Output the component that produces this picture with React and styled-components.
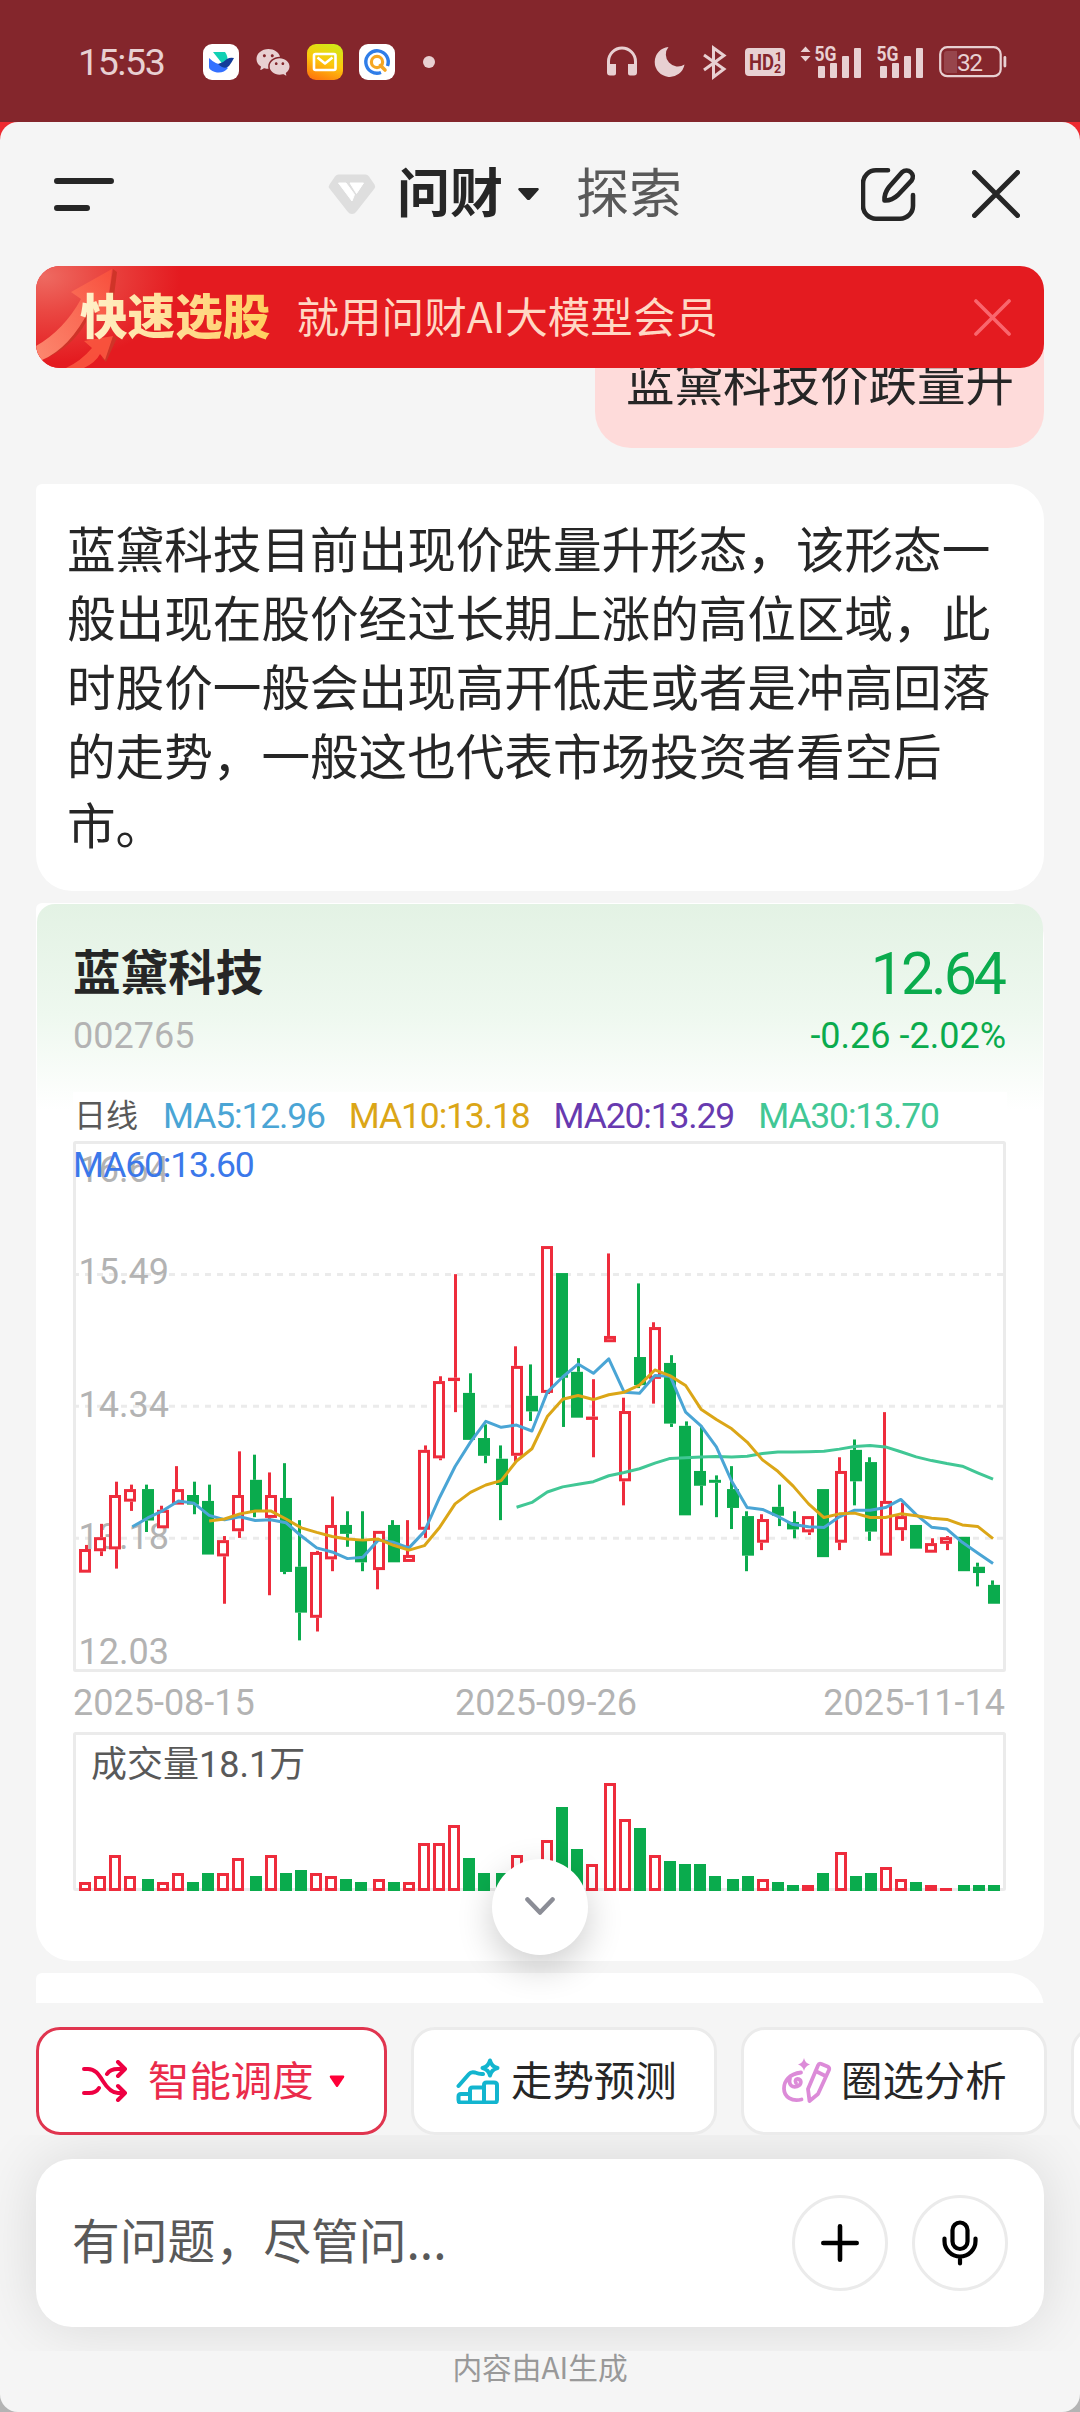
import React from "react"
import styled, { createGlobalStyle } from "styled-components"
import { RiWechatFill } from "react-icons/ri"

const GlobalStyle = createGlobalStyle`
  * {
    box-sizing: border-box;
  }

  body {
    background: #84262c;
    margin: 0;
  }
`

const cjk = `"Noto Sans CJK SC", sans-serif`
const latin = `Roboto, "Noto Sans CJK SC", sans-serif`

const red = "#ee2c3c"
const green = "#0aab4d"

const Screen = styled.div`
  background: linear-gradient(#ee2a30 50%, #b4b4b4 50%);
  color: #262626;
  font-family: ${cjk};
  height: 2412px;
  overflow: hidden;
  width: 1080px;
`

const StatusBar = styled.div`
  align-items: center;
  background: #84262c;
  color: #e8d0d2;
  display: flex;
  height: 122px;
  justify-content: space-between;
  padding: 2px 73px 0 78px;
`

const StatusGroup = styled.div`
  align-items: center;
  display: flex;
  gap: 16px;
`

const Clock = styled.span`
  font-family: ${latin};
  font-size: 37.5px;
  letter-spacing: -1.4px;
  line-height: 40px;
  width: 109px;
`

const AppIcon = styled.span`
  align-items: center;
  background: ${props => props.$bg || "none"};
  border-radius: 9px;
  display: flex;
  height: 36px;
  justify-content: center;
  width: 36px;
`

const Dot = styled.i`
  background: currentColor;
  border-radius: 50%;
  height: 12px;
  width: 12px;
`

const Signal = styled.svg`
  overflow: visible;
`

const Sheet = styled.div`
  background: #f5f5f5;
  border-radius: 18px;
  display: flex;
  flex-direction: column;
  height: 2290px;
  overflow: hidden;
  position: relative;
`

const Header = styled.header`
  align-items: center;
  display: flex;
  flex: none;
  height: 144px;
  padding: 0 60px 0 54px;
`

const HeaderTabs = styled.div`
  align-items: center;
  display: flex;
  margin-left: 214px;
`

const Tab = styled.span`
  color: ${props => (props.$active ? "#262626" : "#595959")};
  font-size: 53px;
  font-weight: ${props => (props.$active ? 700 : 400)};
  line-height: 60px;
  margin: -9px 0 0 ${props => (props.$active ? 21 : 36)}px;
`

const Caret = styled.svg`
  margin-left: ${props => props.$gap || 0}px;
`

const HeaderActions = styled.div`
  align-items: center;
  display: flex;
  gap: 56px;
  margin-left: auto;
`

const Banner = styled.div`
  align-items: center;
  background: #e41b20;
  border-radius: 24px;
  display: flex;
  flex: none;
  height: 102px;
  margin: 0 36px;
  overflow: hidden;
  padding: 0 33px 0 44px;
  position: relative;
  z-index: 1;
`

const BannerArt = styled.svg`
  left: 0;
  position: absolute;
  top: 0;
`

const BannerTitle = styled.strong`
  background: linear-gradient(90deg, #fff2cc, #ffd98a 60%, #ffcf5e);
  background-clip: text;
  color: transparent;
  font-size: 47.6px;
  font-weight: 900;
  line-height: 60px;
  position: relative;
  top: -3px;
`

const BannerText = styled.span`
  color: #ffd8c4;
  flex: 1;
  font-size: 42.6px;
  line-height: 60px;
  margin: -4px 0 0 26px;
`

const Feed = styled.main`
  display: flex;
  flex: none;
  flex-direction: column;
  height: 1685px;
  margin-top: -50px;
  overflow: hidden;
  padding: 0 36px;
`

const Question = styled.div`
  align-self: flex-end;
  background: #fedbda;
  border-radius: 36px 6px 36px 36px;
  flex: none;
  font-size: 48.5px;
  height: 130px;
  line-height: 69px;
  margin-bottom: 36px;
  padding: 28px 30px 32px 31px;
`

const Card = styled.section`
  background: #fff;
  border-radius: 6px 36px 36px 36px;
  flex: none;
  height: ${props => props.$height}px;
  margin-bottom: 12px;
`

const Answer = styled.p`
  font-size: 48.6px;
  line-height: 69px;
  margin: 0;
  padding: 29px 30px 0 31px;
`

const StockBody = styled.div`
  background: linear-gradient(#e3f2e4, #eef8ef 110px, #fff 206px);
  border-radius: 18px 24px 0 0;
  padding: 0 36px;
  position: relative;
  margin: 0 1px;
  top: 1px;
`

const StockHead = styled.div`
  align-items: flex-end;
  display: flex;
  height: 153px;
  justify-content: space-between;
`

const StockName = styled.div`
  font-size: 47.6px;
  font-weight: 700;
  line-height: 60px;
  margin-bottom: 15px;
`

const StockCode = styled.div`
  color: #b3b3b3;
  font-family: ${latin};
  font-size: 36px;
  line-height: 42px;
`

const Quote = styled.div`
  color: ${green};
  font-family: ${latin};
  margin-right: 1px;
  text-align: right;
`

const Price = styled.div`
  font-size: 59px;
  letter-spacing: -3px;
  line-height: 60px;
  margin: 0 2px 11px 0;
`

const Change = styled.div`
  font-size: 36px;
  line-height: 42px;
`

const Legend = styled.div`
  background: #fff;
  column-gap: 24px;
  display: flex;
  flex-wrap: wrap;
  font-family: ${latin};
  font-size: 35.5px;
  height: 49px;
  letter-spacing: -1.15px;
  line-height: 49px;
  margin-top: 35px;
  position: relative;
  z-index: 1;
`

const LegendItem = styled.span`
  color: ${props => props.$color};
`

const Period = styled.span`
  color: #595959;
  font-size: 32px;
  letter-spacing: 0;
  padding: 0 1px;
`

const Chart = styled.svg`
  display: block;
`

const Dates = styled.div`
  align-items: center;
  color: #b3b3b3;
  display: flex;
  font-family: ${latin};
  font-size: 36px;
  height: 60px;
  justify-content: space-between;
  padding: 1px 2px 0 0;

  span:nth-child(2) {
    margin-left: 14px;
  }
`

const ScrollDown = styled.button`
  align-items: center;
  background: #fff;
  border: 0;
  border-radius: 50%;
  bottom: 457px;
  box-shadow: 0 12px 36px rgba(0, 0, 0, 0.2);
  display: flex;
  height: 96px;
  justify-content: center;
  left: 492px;
  padding: 0;
  position: absolute;
  width: 96px;
`

const Chips = styled.div`
  display: flex;
  flex: none;
  gap: 24px;
  margin-top: 24px;
  overflow: hidden;
  padding-left: 36px;
`

const Chip = styled.button`
  align-items: center;
  background: #fff;
  border: 3px solid ${props => (props.$active ? "#e0354f" : "#ebebeb")};
  border-radius: 24px;
  color: ${props => (props.$active ? "#ea2b4b" : "#262626")};
  display: flex;
  flex: none;
  font-family: ${cjk};
  font-size: 41.4px;
  height: 108px;
  line-height: 60px;
  padding: 0 0 0 ${props => props.$pad || 38}px;
  width: ${props => props.$width}px;
`

const ChipLabel = styled.span`
  margin: -7px 0 0 ${props => props.$gap}px;
`

const Composer = styled.div`
  flex: none;
  height: 216px;
  overflow: hidden;
  padding: 24px 36px;
`

const InputBox = styled.div`
  align-items: center;
  background: #fff;
  border-radius: 36px;
  box-shadow: 0 0 60px rgba(0, 0, 0, 0.12);
  display: flex;
  gap: 24px;
  height: 168px;
  padding: 0 36px;
`

const Placeholder = styled.span`
  color: #595959;
  flex: 1;
  font-size: 47.8px;
  line-height: 60px;
  margin-top: -8px;
`

const RoundButton = styled.button`
  align-items: center;
  background: #fff;
  border: 3px solid #ebebeb;
  border-radius: 50%;
  display: flex;
  height: 96px;
  justify-content: center;
  padding: 0;
  width: 96px;
`

const Note = styled.div`
  color: #999;
  font-size: 29.7px;
  line-height: 32px;
  text-align: center;
`

// [isUp, high, body top, body bottom, low], in plot units measured downwards
const candles = [
  [1, 1122, 1133, 1197, 1197], [1, 1065, 1101, 1139, 1152], [1, 951, 987, 1134, 1186],
  [1, 959, 971, 1005, 1030], [0, 959, 971, 1056, 1087], [1, 1016, 1027, 1077, 1077],
  [1, 909, 971, 1013, 1013], [0, 951, 987, 1013, 1039], [0, 959, 1003, 1148, 1148],
  [1, 1098, 1109, 1153, 1281], [1, 869, 987, 1085, 1103], [0, 878, 946, 1033, 1047],
  [1, 926, 987, 1049, 1258], [0, 901, 995, 1195, 1201], [0, 1055, 1181, 1305, 1380],
  [1, 1138, 1141, 1319, 1356], [1, 991, 1068, 1161, 1193], [0, 1031, 1068, 1092, 1127],
  [0, 1031, 1106, 1169, 1193], [1, 1084, 1084, 1190, 1242], [0, 1055, 1068, 1169, 1169],
  [1, 1055, 1149, 1168, 1168], [1, 853, 865, 1081, 1103], [1, 666, 679, 888, 893],
  [1, 390, 670, 679, 763], [0, 658, 711, 838, 838], [0, 796, 833, 881, 901],
  [0, 853, 889, 960, 1055], [1, 585, 638, 881, 897], [0, 634, 719, 761, 787],
  [1, 314, 314, 711, 714], [0, 387, 387, 670, 803], [0, 617, 654, 778, 778],
  [1, 674, 775, 784, 885], [1, 334, 557, 574, 574], [1, 724, 760, 950, 1015],
  [0, 415, 614, 690, 698], [1, 520, 533, 673, 740], [0, 609, 630, 794, 803],
  [0, 788, 800, 1042, 1042], [0, 800, 922, 962, 1015], [0, 934, 946, 954, 1047],
  [0, 909, 971, 1022, 1079], [0, 1031, 1044, 1151, 1193], [1, 1039, 1052, 1116, 1136],
  [0, 959, 1019, 1043, 1071], [0, 1031, 1060, 1080, 1104], [1, 1044, 1044, 1088, 1095],
  [0, 971, 971, 1155, 1155], [1, 885, 922, 1116, 1136], [0, 837, 865, 950, 1015],
  [0, 885, 898, 1086, 1111], [1, 763, 1003, 1151, 1151], [1, 1008, 1044, 1082, 1111],
  [0, 1068, 1068, 1132, 1132], [1, 1104, 1117, 1143, 1143], [1, 1098, 1101, 1119, 1136],
  [0, 1100, 1100, 1193, 1193], [0, 1170, 1181, 1198, 1234], [0, 1218, 1230, 1281, 1281],
]

const volumes = [
  9, 15, 36, 15, 12, 9, 18, 9, 18, 18, 33, 15, 36, 18, 21, 18, 15, 12, 9, 12,
  9, 9, 48, 48, 66, 33, 18, 18, 36, 24, 51, 84, 42, 27, 108, 72, 63, 36, 30, 27,
  27, 15, 12, 15, 12, 9, 6, 6, 18, 39, 15, 18, 24, 12, 9, 6, 3, 6, 6, 6,
]

const averages = [
  {
    color: "#41c795",
    start: 28,
    values: [
      1020, 1007, 979, 965, 958, 951, 935, 926, 916, 901, 888, 886, 884, 883, 884, 882,
      875, 871, 871, 870, 869, 863, 856, 853, 857, 870, 884, 894, 902, 909, 927, 944,
    ],
  },
  {
    color: "#4aa5d5",
    start: 3,
    values: [
      1073, 1049, 1029, 1003, 1009, 1042, 1054, 1046, 1056, 1054, 1062, 1098, 1130, 1141,
      1159, 1155, 1109, 1115, 1130, 1086, 993, 910, 844, 788, 804, 798, 814, 709, 668, 633,
      658, 619, 709, 712, 664, 666, 763, 800, 857, 950, 1021, 1026, 1045, 1067, 1073, 1075,
      1046, 1028, 1028, 1021, 999, 1040, 1074, 1079, 1115, 1144, 1172,
    ],
  },
  {
    color: "#dba617",
    start: 8,
    values: [
      1057, 1052, 1038, 1030, 1030, 1052, 1076, 1088, 1099, 1106, 1109, 1106, 1123, 1136,
      1124, 1074, 1011, 980, 960, 948, 895, 862, 775, 728, 718, 729, 716, 709, 690, 649,
      665, 691, 755, 783, 808, 844, 892, 923, 963, 1011, 1048, 1038, 1036, 1048, 1048, 1038,
      1043, 1050, 1053, 1068, 1072, 1105,
    ],
  },
]

const priceLabels = [
  ["16.64", 41],
  ["15.49", 142.5],
  ["14.34", 275.7],
  ["13.18", 407.7],
  ["12.03", 522.8],
]

const legend = [
  ["MA5:12.96", "#4aa5d5"],
  ["MA10:13.18", "#dba617"],
  ["MA20:13.29", "#673ab0"],
  ["MA30:13.70", "#41c795"],
  ["MA60:13.60", "#3b78ea"],
]

// Bodies and wicks snap to a 3px grid
const bodyX = i => 6 + 15 * i + 3 * Math.floor(0.132 * i + 0.558)
const wickX = i => 12 + 15 * i + 3 * Math.floor(0.132 * i + 0.106)
const lineX = i => 13.2 + 15.37 * i
const plotY = v => (v - 30) / 2.7034

const Bar = ({ up, x, y, height }) =>
  up && height > 6 ? (
    <rect x={x + 1.5} y={y + 1.5} width={9} height={height - 3} fill="#fff" stroke={red} strokeWidth={3} />
  ) : (
    <rect x={x} y={y} width={12} height={height} fill={up ? red : green} />
  )

const Candle = ({ index, up, high, top, bottom, low }) => {
  const color = up ? red : green
  const x = wickX(index)
  const body = plotY(top)
  return (
    <g>
      <Bar up={up} x={bodyX(index)} y={body} height={plotY(bottom) - body} />
      <rect x={x} y={plotY(high)} width={3} height={body - plotY(high)} fill={color} />
      <rect x={x} y={plotY(bottom)} width={3} height={plotY(low) - plotY(bottom)} fill={color} />
    </g>
  )
}

const PriceChart = () => (
  <Chart width="933" height="531">
    <rect x="1.5" y="1.5" width="930" height="528" rx="1" fill="none" stroke="#ebebeb" strokeWidth="3" />
    {[133.6, 265.3, 397.3].map(y => (
      <line key={y} x1="0" x2="931" y1={y} y2={y} stroke="#ebebeb" strokeWidth="3" strokeDasharray="6 6" />
    ))}
    {priceLabels.map(([label, y]) => (
      <text key={label} x="5.5" y={y} fill="#b3b3b3" fontFamily="Roboto" fontSize="36">
        {label}
      </text>
    ))}
    {candles.map(([up, high, top, bottom, low], i) => (
      <Candle key={i} index={i} up={up} high={high} top={top} bottom={bottom} low={low} />
    ))}
    {averages.map(({ color, start, values }) => (
      <polyline
        key={color}
        fill="none"
        stroke={color}
        strokeWidth="3"
        strokeLinejoin="round"
        points={values.map((v, i) => `${lineX(start + i)},${plotY(v)}`).join(" ")}
      />
    ))}
  </Chart>
)

const VolumeChart = () => (
  <Chart width="933" height="159">
    <rect x="1.5" y="1.5" width="930" height="156" rx="1" fill="none" stroke="#ebebeb" strokeWidth="3" />
    <text x="18" y="45" fill="#595959" fontFamily="Roboto, 'Noto Sans CJK SC', sans-serif" fontSize="36">
      成交量18.1万
    </text>
    {volumes.map((height, i) => (
      <Bar key={i} up={candles[i][0]} x={bodyX(i)} y={159 - height} height={height} />
    ))}
  </Chart>
)

const BirdIcon = () => (
  <svg width="36" height="36" viewBox="0 0 36 36">
    <path d="M10 8h12q3 4 2.500 9l-5 3z" fill="#12d0b4" />
    <path d="M6 14q7 7 15 7l4 3q-5 6-13 4-6-2-6-5z" fill="#3370ff" />
    <path d="M15 20q5-1 9-5 3-2 7-1-2 4-5 8-3 3-7 1-2-1-4-3z" fill="#133c9a" />
  </svg>
)

const MailIcon = () => (
  <svg width="26" height="20" viewBox="0 0 26 20" fill="none" stroke="#fff" strokeWidth="2.600" strokeLinejoin="round">
    <rect x="2" y="2" width="21.500" height="16" rx="1.500" />
    <path d="M5.500 5.500l7.500 6 7.500-6" />
  </svg>
)

const FinderIcon = () => (
  <svg width="36" height="36" viewBox="0 0 36 36" fill="none">
    <path d="M22 28.500A11.200 11.200 0 1 1 28.500 22" stroke="#2f7de8" strokeWidth="3.400" />
    <circle cx="18" cy="18" r="5.600" stroke="#f5a623" strokeWidth="3.200" />
    <path d="M21.500 21.500l4.500 4.500" stroke="#f5a623" strokeWidth="3.600" strokeLinecap="round" />
  </svg>
)

const HeadphoneIcon = () => (
  <svg width="31" height="32" viewBox="0 0 31 32">
    <path d="M1.500 20v-4.500a13.500 13.500 0 0 1 27 0V20" fill="none" stroke="currentColor" strokeWidth="3" />
    <path d="M0 18h9v9.500a2 2 0 0 1-2 2H3a3 3 0 0 1-3-3zM21 18h9v8.500a3 3 0 0 1-3 3h-4a2 2 0 0 1-2-2z" fill="currentColor" />
  </svg>
)

const MoonIcon = () => (
  <svg width="32" height="32" viewBox="0 0 32 32">
    <path d="M14.500 1A15 15 0 1 0 30.500 18.500 12 12 0 0 1 14.500 1z" fill="currentColor" />
  </svg>
)

const BluetoothIcon = () => (
  <svg width="27" height="36" viewBox="0 0 27 36" fill="none" stroke="currentColor" strokeWidth="3">
    <path d="M2 11l20 14-10.500 8V4L22 11.500 2 26" />
  </svg>
)

const HdIcon = () => (
  <svg width="40" height="28" viewBox="0 0 40 28" fontFamily="Roboto" fontWeight="700">
    <rect width="40" height="28" rx="4" fill="currentColor" />
    <g fill="#84262c">
      <text x="4" y="22" fontSize="22" textLength="25" lengthAdjust="spacingAndGlyphs">HD</text>
      <text x="30" y="13" fontSize="12.500">1</text>
      <text x="29" y="25" fontSize="12.500">2</text>
    </g>
  </svg>
)

const SignalIcon = ({ arrows }) => (
  <Signal width={arrows ? 60 : 46} height="34" viewBox={arrows ? "-14 0 60 34" : "0 0 46 34"} fill="currentColor">
    {arrows && <path d="M-14.500 7l5-5.500 5 5.500zM-14.500 11l5 5.500 5-5.500z" />}
    <text x="-.5" y="16" fontFamily="Roboto" fontSize="21" fontWeight="700" textLength="22" lengthAdjust="spacingAndGlyphs">
      5G
    </text>
    <rect x="3" y="21" width="7" height="12" rx="1" />
    <rect x="15" y="18" width="7" height="15" rx="1" />
    <rect x="27" y="11" width="7" height="22" rx="1" />
    <rect x="39" y="3" width="7" height="30" rx="1" />
  </Signal>
)

const BatteryIcon = () => (
  <svg width="68" height="32" viewBox="0 0 68 32">
    <rect x="1.200" y="1.200" width="60.500" height="29" rx="7" fill="none" stroke="currentColor" strokeWidth="2.200" />
    <path d="M8 5h10v22H8a3 3 0 0 1-3-3V8a3 3 0 0 1 3-3z" fill="#97454c" />
    <rect x="64.500" y="10" width="2.800" height="11.500" rx="1.400" fill="currentColor" />
    <text x="18" y="24.500" fill="currentColor" fontFamily="Roboto" fontSize="24.500" textLength="26">32</text>
  </svg>
)

const GemIcon = () => (
  <svg width="48" height="40" viewBox="0 0 47 40">
    <path d="M10 .5h27q2 0 3.500 2l5.500 8q1.200 2 0 4L28 37.500q-2 2.500-4.500 2.500T19 37.500L1 14.500q-1.500-2 0-4l5.500-8Q8 .5 10 .5z" fill="#dedede" />
    <path d="M10 9h7.500L26 20.500 23.500 27z M21.500 9H35L28 19.500z" fill="#fff" stroke="#fff" strokeLinejoin="round" />
  </svg>
)

const EditIcon = () => (
  <svg width="55" height="55" viewBox="0 0 55 55" fill="none" stroke="#262626" strokeWidth="4.600" strokeLinecap="round" strokeLinejoin="round">
    <path d="M27 3.300H15a13 13 0 0 0-13 13v22.500a13 13 0 0 0 13 13h24a13 13 0 0 0 13-13V28" />
    <path d="M41 5.200c6-5 14 2 9.500 8.500L37 28q-6.500 6-13.500 5.500-.5-7 4.500-13.500z" />
  </svg>
)

const CrossIcon = ({ size, width, color }) => (
  <svg width={size} height={size} viewBox="0 0 48 48" fill="none" stroke={color} strokeWidth={width} strokeLinecap="round">
    <path d="M2.500 2.500l43 43M45.500 2.500l-43 43" />
  </svg>
)

const ShuffleIcon = () => (
  <svg width="46" height="42" viewBox="0 0 46 42" fill="none" stroke="#ee0042" strokeWidth="4" strokeLinecap="round" strokeLinejoin="round">
    <path d="M2 9h4c7 0 10.500 5 14.500 11.500S29 33 36 33h7M36 26l7 7-7 7" />
    <path d="M2 33h5c5 0 8-1.500 10-5M25 14c2.500-4 5.500-5 11-5h7M36 2l7 7-7 7" />
  </svg>
)

const TrendIcon = () => (
  <svg width="45" height="46" viewBox="0 0 45 46" fill="none" stroke="#12b5cf" strokeWidth="4" strokeLinejoin="round" strokeLinecap="round">
    <path d="M2.500 28L13 16q2-2.500 6-1.500 5 2 8 1.500" />
    <path d="M34 2.500q1.500 6 7.500 7.500-6 1.500-7.500 7.500-1.500-6-7.500-7.500 6-1.500 7.500-7.500z" />
    <path d="M5 36h9v8.500H5q-2.500 0-2.500-2.500v-3.500Q2.500 36 5 36zM14 44.500V32q0-2.500 2.500-2.500H28v15zM28 44.500V27q0-2.500 2.500-2.500H38q3 0 3 2.500v15q0 2.500-3 2.500z" />
  </svg>
)

const CircleIcon = () => (
  <svg width="50" height="48" viewBox="0 0 50 48" fill="none" stroke="#dc8bd8" strokeWidth="3.800" strokeLinejoin="round" strokeLinecap="round">
    <path d="M22 1q1 5 6 6.500-5 1.500-6 6.500-1-5-6-6.500 5-1.500 6-6.500z" fill="#dc8bd8" stroke="none" />
    <path d="M19 15.500C7 17 2 24 2 31.500 2 40 10 45 19.500 42.500M8 21c-2 8 3 9.500 7 8.500 4.500-1.500 5-6 1.500-7.500-2.500-.5-4 1.500-2.500 4" />
    <path d="M36 8.500q1-2.500 3.500-1.500l6 2.500q2.500 1 1.500 3.500L36 37l-8.500 7-1.500-12zM33.500 14l10 5" />
  </svg>
)

const PlusIcon = () => (
  <svg width="38" height="38" viewBox="0 0 38 38" stroke="#000" strokeWidth="4.600" strokeLinecap="round">
    <path d="M19 2.300v33.400M2.300 19h33.400" />
  </svg>
)

const MicIcon = () => (
  <svg width="36" height="46" viewBox="0 0 36 46" fill="none" stroke="#000" strokeWidth="4.200" strokeLinecap="round">
    <rect x="10.500" y="2.500" width="15" height="26.500" rx="7.500" />
    <path d="M2.500 18.500V21a15.500 15.500 0 0 0 31 0v-2.500M18 37v6.500" />
  </svg>
)

const App = () => (
  <Screen>
    <GlobalStyle />
    <StatusBar>
      <StatusGroup>
        <Clock>15:53</Clock>
        <AppIcon $bg="#fff"><BirdIcon /></AppIcon>
        <AppIcon><RiWechatFill size={37} /></AppIcon>
        <AppIcon $bg="linear-gradient(20deg, #ff6a0d, #fdc70c 50%, #c8f01a)"><MailIcon /></AppIcon>
        <AppIcon $bg="#fff"><FinderIcon /></AppIcon>
        <AppIcon><Dot /></AppIcon>
      </StatusGroup>
      <StatusGroup>
        <HeadphoneIcon />
        <MoonIcon />
        <BluetoothIcon />
        <HdIcon />
        <SignalIcon arrows />
        <SignalIcon />
        <BatteryIcon />
      </StatusGroup>
    </StatusBar>
    <Sheet>
      <Header>
        <svg width="60" height="33" viewBox="0 0 60 33" stroke="#262626" strokeWidth="6" strokeLinecap="round">
          <path d="M3 3h54M3 30h30" />
        </svg>
        <HeaderTabs>
          <GemIcon />
          <Tab $active>问财</Tab>
          <Caret $gap={14} width="23" height="14" viewBox="0 0 23 14">
            <path d="M2 1h19q1.500 1 .5 2L13 12.500q-1.500 1-3 0L1.500 3Q.5 2 2 1z" fill="#262626" />
          </Caret>
          <Tab>探索</Tab>
        </HeaderTabs>
        <HeaderActions>
          <EditIcon />
          <CrossIcon size={48} width={5} color="#262626" />
        </HeaderActions>
      </Header>
      <Banner>
        <BannerArt width="240" height="102" viewBox="0 0 240 102">
          <defs>
            <radialGradient id="glow" cx="0.05" cy="0.1" r="0.85">
              <stop offset="0" stopColor="#ee6a61" />
              <stop offset="0.4" stopColor="#ea4843" />
              <stop offset="1" stopColor="#e41b20" />
            </radialGradient>
            <linearGradient id="arrow" x1="0" y1="1" x2="1" y2="0">
              <stop offset="0" stopColor="#ff9478" />
              <stop offset="1" stopColor="#f9503c" />
            </linearGradient>
          </defs>
          <rect width="160" height="102" fill="url(#glow)" />
          <path d="M77 3l4 3-5 40-5-4zM77 70l4 2-11 24-4-4zM6 94q30-16 46-48l-2 10Q36 82 6 94z" fill="#cf3428" />
          <path d="M76 3L35 26l10 7Q28 64 0 80v14h6Q34 82 53 44l17 7z" fill="url(#arrow)" opacity="0.9" />
          <path d="M77 70L48 75l8 7Q45 95 30 102h18q12-6 16-14l5 6z" fill="#f9563f" opacity="0.9" />
        </BannerArt>
        <BannerTitle>快速选股</BannerTitle>
        <BannerText>就用问财AI大模型会员</BannerText>
        <CrossIcon size={37} width={4.6} color="#f9666d" />
      </Banner>
      <Feed>
        <Question>蓝黛科技价跌量升</Question>
        <Card $height={407}>
          <Answer>
            蓝黛科技目前出现价跌量升形态，该形态一般出现在股价经过长期上涨的高位区域，此时股价一般会出现高开低走或者是冲高回落的走势，一般这也代表市场投资者看空后市。
          </Answer>
        </Card>
        <Card $height={1058}>
          <StockBody>
            <StockHead>
              <div>
                <StockName>蓝黛科技</StockName>
                <StockCode>002765</StockCode>
              </div>
              <Quote>
                <Price>12.64</Price>
                <Change>-0.26 -2.02%</Change>
              </Quote>
            </StockHead>
            <Legend>
              <Period>日线</Period>
              {legend.map(([label, color]) => (
                <LegendItem key={label} $color={color}>
                  {label}
                </LegendItem>
              ))}
            </Legend>
            <PriceChart />
            <Dates>
              <span>2025-08-15</span>
              <span>2025-09-26</span>
              <span>2025-11-14</span>
            </Dates>
            <VolumeChart />
          </StockBody>
        </Card>
        <Card $height={200} />
      </Feed>
      <ScrollDown>
        <svg width="32" height="20" viewBox="0 0 32 20" fill="none" stroke="#8b8d96" strokeWidth="4.600" strokeLinecap="round" strokeLinejoin="round">
          <path d="M3.500 2.500L16 15.500l12.500-13" />
        </svg>
      </ScrollDown>
      <Chips>
        <Chip $active $width={351} $pad={43}>
          <ShuffleIcon />
          <ChipLabel $gap={20}>智能调度</ChipLabel>
          <Caret $gap={15} width="16" height="13" viewBox="0 0 16 13">
            <path d="M1.500.5h13q1.500.500.500 2l-6 9q-1 1-2 0L1 2.500Q0 1 1.500.5z" fill="#ff0038" />
          </Caret>
        </Chip>
        <Chip $width={306} $pad={42}>
          <TrendIcon />
          <ChipLabel $gap={10}>走势预测</ChipLabel>
        </Chip>
        <Chip $width={306}>
          <CircleIcon />
          <ChipLabel $gap={9}>圈选分析</ChipLabel>
        </Chip>
        <Chip $width={306} />
      </Chips>
      <Composer>
        <InputBox>
          <Placeholder>有问题，尽管问...</Placeholder>
          <RoundButton><PlusIcon /></RoundButton>
          <RoundButton><MicIcon /></RoundButton>
        </InputBox>
      </Composer>
      <Note>内容由AI生成</Note>
    </Sheet>
  </Screen>
)

export default App
